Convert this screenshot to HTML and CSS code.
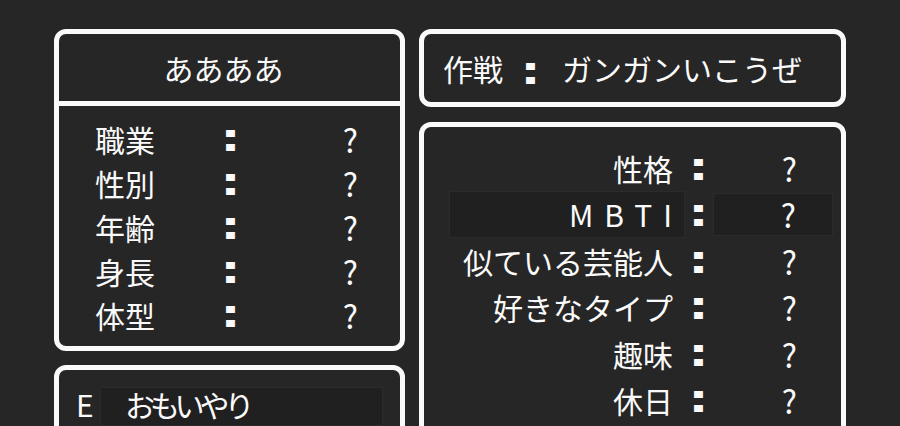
FILE: index.html
```html
<!DOCTYPE html>
<html lang="ja">
<head>
<meta charset="utf-8">
<title>ステータス</title>
<link rel="stylesheet" href="styles.css">
</head>
<body>
<div class="screen">
  <div class="col-left">
    <section class="win status">
      <div class="status-head">ああああ</div>
      <div class="status-body">
        <span class="label">職業</span><span class="colon-cell"><span class="colon">:</span></span><span class="val">?</span>
        <span class="label">性別</span><span class="colon-cell"><span class="colon">:</span></span><span class="val">?</span>
        <span class="label">年齢</span><span class="colon-cell"><span class="colon">:</span></span><span class="val">?</span>
        <span class="label">身長</span><span class="colon-cell"><span class="colon">:</span></span><span class="val">?</span>
        <span class="label">体型</span><span class="colon-cell"><span class="colon">:</span></span><span class="val">?</span>
      </div>
    </section>
    <section class="win equip">
      <span class="equip-mark">E</span>
      <span class="equip-item">おもいやり</span>
    </section>
  </div>
  <div class="col-right">
    <section class="win strategy">
      <span class="strat-label">作戦</span><span class="strat-colon"><span class="colon">:</span></span><span class="strat-value">ガンガンいこうぜ</span>
    </section>
    <section class="win profile">
      <span class="plabel">性格</span><span class="pcolon"><span class="colon">:</span></span><span class="pval">?</span>
      <span class="plabel hl mbti">MBTI</span><span class="pcolon"><span class="colon">:</span></span><span class="pval hl hl-val">?</span>
      <span class="plabel">似ている芸能人</span><span class="pcolon"><span class="colon">:</span></span><span class="pval">?</span>
      <span class="plabel">好きなタイプ</span><span class="pcolon"><span class="colon">:</span></span><span class="pval">?</span>
      <span class="plabel">趣味</span><span class="pcolon"><span class="colon">:</span></span><span class="pval">?</span>
      <span class="plabel">休日</span><span class="pcolon"><span class="colon">:</span></span><span class="pval">?</span>
    </section>
  </div>
</div>
</body>
</html>
```
FILE: styles.css
```css
html, body {
  margin: 0;
  padding: 0;
}
body {
  background: #262626;
  color: #fafafa;
  font-family: "Noto Sans CJK JP", "Noto Sans", sans-serif;
  height: 426px;
  overflow: hidden;
}
.screen {
  display: flex;
  gap: 14px;
  padding: 29px 54px 0;
}
.col-left {
  flex: none;
  width: 351px;
  display: flex;
  flex-direction: column;
  gap: 14px;
}
.col-right {
  flex: none;
  width: 427px;
  display: flex;
  flex-direction: column;
  gap: 15px;
}
.win {
  box-sizing: border-box;
  border: 5px solid #fafafa;
  border-radius: 12px;
}
.colon {
  display: inline-block;
  font-family: "DejaVu Sans", sans-serif;
  font-weight: bold;
  font-size: 37px;
  line-height: 1;
  vertical-align: -5px;
  transform: scaleX(1.35);
}

/* status window */
.status {
  height: 322px;
}
.status-head {
  height: 67px;
  border-bottom: 5px solid #fafafa;
  display: flex;
  align-items: center;
  justify-content: center;
  font-size: 30px;
  line-height: 40px;
  padding-right: 12px;
}
.status-body {
  display: grid;
  grid-template-columns: 125px 18px 1fr;
  grid-template-rows: repeat(5, 44px);
  padding: 11px 42px 0 36px;
}
.label {
  font-size: 30px;
  line-height: 44px;
}
.colon-cell {
  line-height: 44px;
  height: 44px;
  text-align: center;
  padding-left: 2px;
}
.val {
  text-align: right;
  font-size: 32px;
  line-height: 44px;
}

/* equip window */
.equip {
  display: flex;
  align-items: flex-start;
  gap: 7px;
  padding: 17px 17px 20px;
}
.equip-mark {
  font-size: 30px;
  line-height: 35px;
  width: 17px;
}
.equip-item {
  flex: 1;
  height: 39px;
  box-sizing: border-box;
  background: #202020;
  border: 1px solid #2b2b2b;
  padding-left: 24px;
  font-size: 30px;
  line-height: 33px;
  letter-spacing: -5px;
}

/* strategy window */
.strategy {
  height: 78px;
  display: flex;
  align-items: center;
  padding-left: 19px;
  font-size: 30px;
}
.strat-label {
  line-height: 40px;
}
.strat-colon {
  width: 30px;
  margin-left: 12px;
  text-align: center;
  line-height: 40px;
}
.strat-value {
  margin-left: 17px;
  line-height: 40px;
}

/* profile window */
.profile {
  display: grid;
  grid-template-columns: 236px 28px 120px;
  grid-auto-rows: 46.4px;
  padding: 18px 8px 20px 25px;
}
.plabel {
  text-align: right;
  padding-right: 12px;
  font-size: 30px;
  line-height: 46px;
}
.pcolon {
  padding-left: 6px;
  line-height: 46px;
}
.pval {
  text-align: right;
  padding-right: 36px;
  font-size: 32px;
  line-height: 46px;
}
.hl {
  box-sizing: border-box;
  background: #202020;
  border: 1px solid #2b2b2b;
}
.mbti {
  letter-spacing: 11px;
  padding-right: 1px;
  line-height: 44px;
}
.hl-val {
  margin: 2px 0;
  line-height: 40px;
}
```
